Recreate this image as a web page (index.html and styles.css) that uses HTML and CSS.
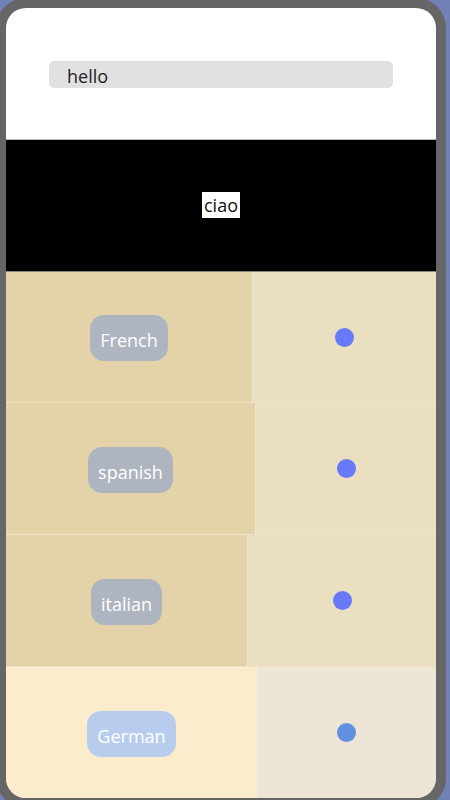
FILE: index.html
```html
<!DOCTYPE html>
<html>
<head>
    <title>Lingue</title>
    <link rel="stylesheet" href="styles.css">
</head>
<body>
    <div class="phone">
        <div class="screen">
            <div class="section top">
                <input type="text" class="search" value="hello">
            </div>
            <div class="section dark">
                <span class="word">ciao</span>
            </div>
            <div class="section row row-french">
                <div class="cell left"><button class="lang">French</button></div>
                <div class="cell right"><span class="dot"></span></div>
            </div>
            <div class="section row row-spanish">
                <div class="cell left"><button class="lang">spanish</button></div>
                <div class="cell right"><span class="dot"></span></div>
            </div>
            <div class="section row row-italian">
                <div class="cell left"><button class="lang">italian</button></div>
                <div class="cell right"><span class="dot"></span></div>
            </div>
            <div class="section row row-german active">
                <div class="cell left"><button class="lang">German</button></div>
                <div class="cell right"><span class="dot"></span></div>
            </div>
        </div>
    </div>
</body>
</html>
```

FILE: styles.css
```css
* {
    margin: 0;
    padding: 0;
    box-sizing: border-box;
}

body {
    font-family: "Open Sans", Arial, sans-serif;
    background-color: #7282b6;
    height: 100vh;
    overflow: hidden;
}

.phone {
    width: 450px;
    height: 810px;
    margin: -2px 0 0 -4px;
    border: 10px solid #666666;
    border-radius: 30px;
    background-color: #666666;
}

.screen {
    height: 100%;
    border-radius: 20px;
    overflow: hidden;
    display: flex;
    flex-direction: column;
}

.section {
    flex: 1;
}

.top {
    background-color: #ffffff;
    display: flex;
    justify-content: center;
    align-items: center;
    border-bottom: 1px solid #b9b9b9;
}

.search {
    width: 80%;
    height: 27px;
    margin-top: 2px;
    border: none;
    border-radius: 5px;
    background-color: #e1e1e1;
    padding: 4px 0 0 18px;
    font-family: "Open Sans", Arial, sans-serif;
    font-size: 18px;
    color: #222222;
    outline: none;
}

.dark {
    background-color: #000000;
    display: flex;
    justify-content: center;
    align-items: center;
    border-bottom: 1px solid #8a8578;
}

.word {
    background-color: #ffffff;
    color: #111111;
    font-size: 18px;
    line-height: 25px;
    padding: 1px 2px 0;
}

.row {
    display: grid;
    background-color: #efe4c8;
    border-top: 1px solid #efe4c8;
}

.row:nth-child(3) {
    border-top: none;
}

.row-french { grid-template-columns: 246px 1fr; }
.row-spanish { grid-template-columns: 249px 1fr; }
.row-italian { grid-template-columns: 241px 1fr; }
.row-german { grid-template-columns: 251px 1fr; }

.cell {
    display: flex;
    justify-content: center;
    align-items: center;
}

.left {
    background-color: #e4d3a9;
}

.right {
    background-color: #ebdfc2;
    border-left: 1px solid #efe6cf;
}

.lang {
    font-family: "Open Sans", Arial, sans-serif;
    font-size: 18px;
    line-height: 24px;
    padding: 13px 10px 9px;
    margin-top: 2px;
    border: none;
    border-radius: 14px;
    background-color: #aeb5c0;
    color: #ffffff;
    cursor: pointer;
}

.dot {
    width: 19px;
    height: 19px;
    border-radius: 50%;
    background-color: #6879f9;
}

/* linha selecionada */
.active .left {
    background-color: #fbeccd;
}

.active .right {
    background-color: #ede5d6;
    border-left: none;
}

.active .lang {
    background-color: #b8cdee;
}

.active .dot {
    background-color: #6190e0;
}
```
